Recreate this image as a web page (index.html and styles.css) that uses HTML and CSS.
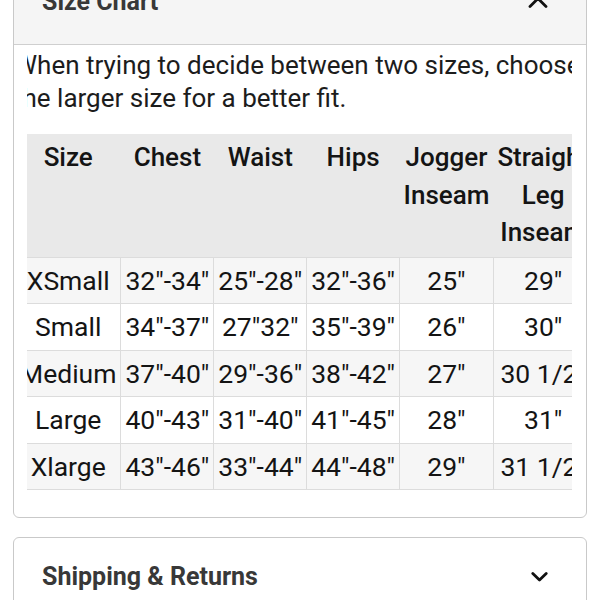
FILE: index.html
```html
<!DOCTYPE html>
<html lang="en">
<head>
<meta charset="utf-8">
<title>Size Chart</title>
<link rel="stylesheet" href="styles.css">
</head>
<body>
<div class="page">
  <section class="card card-open">
    <div class="card-head">
      <span class="card-title">Size Chart</span>
      <svg class="chev chev-up" width="20" height="12" viewBox="0 0 20 12"><polyline points="2,10.5 10,2.5 18,10.5" fill="none" stroke="#111" stroke-width="2.8" stroke-linecap="round" stroke-linejoin="round"/></svg>
    </div>
    <div class="card-body">
      <div class="viewport">
        <div class="scroller">
          <p class="note">When trying to decide between two sizes, choose the larger size for a better fit.</p>
          <table class="chart">
            <thead>
              <tr><th>Size</th><th>Chest</th><th>Waist</th><th>Hips</th><th>Jogger Inseam</th><th>Straight Leg Inseam</th></tr>
            </thead>
            <tbody>
              <tr><td>XSmall</td><td>32"-34"</td><td>25"-28"</td><td>32"-36"</td><td>25"</td><td>29"</td></tr>
              <tr><td>Small</td><td>34"-37"</td><td>27"32"</td><td>35"-39"</td><td>26"</td><td>30"</td></tr>
              <tr><td>Medium</td><td>37"-40"</td><td>29"-36"</td><td>38"-42"</td><td>27"</td><td>30 1/2"</td></tr>
              <tr><td>Large</td><td>40"-43"</td><td>31"-40"</td><td>41"-45"</td><td>28"</td><td>31"</td></tr>
              <tr><td>Xlarge</td><td>43"-46"</td><td>33"-44"</td><td>44"-48"</td><td>29"</td><td>31 1/2"</td></tr>
            </tbody>
          </table>
        </div>
      </div>
    </div>
  </section>
  <section class="card card-closed">
    <div class="card-head">
      <span class="card-title">Shipping &amp; Returns</span>
      <svg class="chev chev-down" width="17" height="12" viewBox="0 0 17 12"><polyline points="1.8,2.5 8.5,9 15.2,2.5" fill="none" stroke="#111" stroke-width="2.8" stroke-linecap="round" stroke-linejoin="round"/></svg>
    </div>
  </section>
</div>
</body>
</html>
```
FILE: styles.css
```css
html, body {
  margin: 0;
  padding: 0;
  background: #ffffff;
  font-family: Roboto, "Liberation Sans", sans-serif;
  color: #1a1a1a;
  overflow: hidden;
}

.page {
  padding: 0 13px;
  display: flex;
  flex-direction: column;
  gap: 19px;
}

.card {
  border: 1px solid #c9c9c9;
  border-radius: 6px;
  background: #fff;
  overflow: hidden;
}

.card-open {
  margin-top: -41px;
}

.card-head {
  display: flex;
  align-items: center;
  justify-content: space-between;
  padding: 26px 38px 26px 28px;
  line-height: 32px;
}

.card-open .card-head {
  background: #f5f5f5;
  border-bottom: 1px solid #cfcfcf;
}

.card-closed .card-head {
  padding-top: 23px;
  padding-bottom: 29px;
}

.card-title {
  font-size: 25px;
  font-weight: 700;
  color: #383838;
}

.chev {
  display: block;
}

.card-body {
  padding: 4px 14px 27px 13px;
}

.viewport {
  overflow: hidden;
}

.scroller {
  margin-left: -13px;
  width: 600px;
}

.note {
  margin: 0 0 19px;
  font-size: 26px;
  line-height: 33px;
  color: #1c1c1c;
}

.chart {
  width: min-content;
  margin-left: 1px;
  border-collapse: collapse;
  font-size: 26.5px;
  line-height: 37.5px;
  color: #141414;
}

.chart th {
  background: #e9e9e9;
  font-weight: 500;
  font-size: 26px;
  vertical-align: top;
  text-align: center;
  padding: 5px 4px 5px;
}

.chart td {
  text-align: center;
  vertical-align: middle;
  padding: 4px 4px;
  border: 1px solid #dcdcdc;
  white-space: nowrap;
}

.chart tbody tr:nth-child(odd) td {
  background: #f6f6f6;
}

.chart tbody tr:nth-child(even) td {
  background: #ffffff;
}
```
